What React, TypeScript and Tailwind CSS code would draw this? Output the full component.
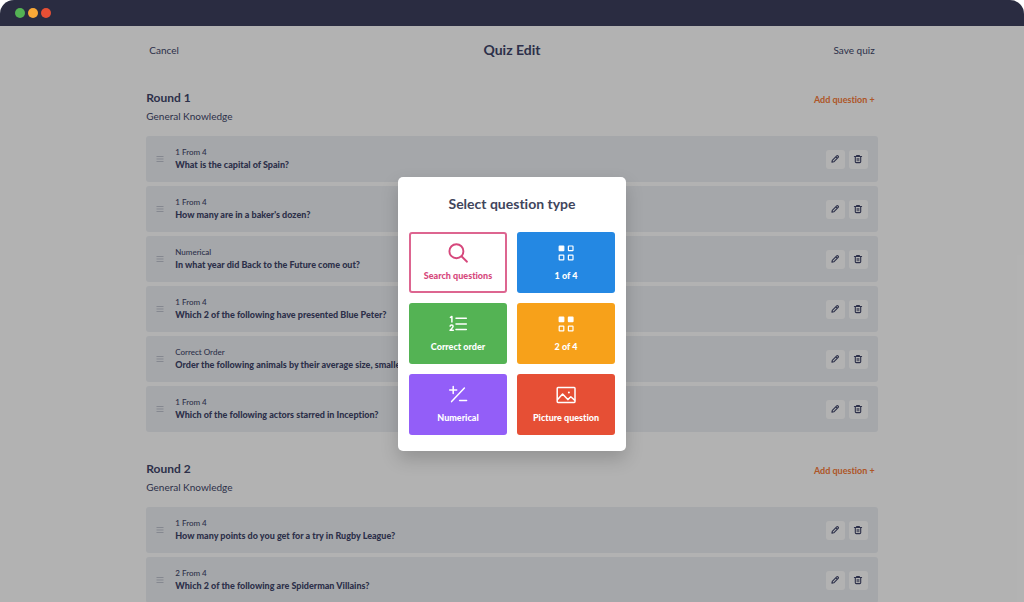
import React from "react";

type Round = { name: string; topic: string; questions: { type: string; text: string }[] };

const rounds: Round[] = [
  {
    name: "Round 1",
    topic: "General Knowledge",
    questions: [
      { type: "1 From 4", text: "What is the capital of Spain?" },
      { type: "1 From 4", text: "How many are in a baker's dozen?" },
      { type: "Numerical", text: "In what year did Back to the Future come out?" },
      { type: "1 From 4", text: "Which 2 of the following have presented Blue Peter?" },
      { type: "Correct Order", text: "Order the following animals by their average size, smallest first" },
      { type: "1 From 4", text: "Which of the following actors starred in Inception?" },
    ],
  },
  {
    name: "Round 2",
    topic: "General Knowledge",
    questions: [
      { type: "1 From 4", text: "How many points do you get for a try in Rugby League?" },
      { type: "2 From 4", text: "Which 2 of the following are Spiderman Villains?" },
    ],
  },
];

function PencilIcon() {
  return (
    <svg viewBox="0 0 12 12" className="size-3" fill="none" stroke="currentColor" strokeLinejoin="round" strokeLinecap="round" aria-hidden="true">
      <path d="M2.9 9.2 3.3 7.3 7.7 2.9a.9.9 0 0 1 1.3 0l.2.2a.9.9 0 0 1 0 1.3L4.8 8.8Z M6.9 3.8 8.3 5.2" strokeWidth="1.1" />
    </svg>
  );
}

function TrashIcon() {
  return (
    <svg viewBox="0 0 12 12" className="size-3" fill="none" stroke="currentColor" strokeLinecap="round" strokeLinejoin="round" aria-hidden="true">
      <path d="M2.4 3.5h7.2M4.6 3.3v-.8h2.8v.8M3.3 3.7v5c0 .6.3.9.9.9h3.6c.6 0 .9-.3.9-.9v-5" strokeWidth="1.1" />
      <path d="M5.2 5.4v2.4M6.8 5.4v2.4" strokeWidth=".9" />
    </svg>
  );
}

function SearchIcon() {
  return (
    <svg viewBox="0 0 24 24" className="size-6" fill="none" stroke="currentColor" strokeWidth="1.9" strokeLinecap="round" aria-hidden="true">
      <circle cx="10.4" cy="10.2" r="7" />
      <path d="m15.5 15.3 5.5 5.4" />
    </svg>
  );
}

function SquaresIcon({ filled }: { filled: number }) {
  const cells = [[5.2, 5], [14.4, 5], [5.2, 14.2], [14.4, 14.2]];
  return (
    <svg viewBox="0 0 24 24" className="size-6" stroke="currentColor" strokeWidth="1.2" strokeLinejoin="round" aria-hidden="true">
      {cells.map(([x, y], i) => (
        <rect key={i} x={x} y={y} width="4.6" height="4.6" rx=".4" fill={i < filled ? "currentColor" : "none"} />
      ))}
    </svg>
  );
}

function OrderIcon() {
  return (
    <svg viewBox="0 0 24 24" className="size-6" fill="none" stroke="currentColor" strokeWidth="1.5" strokeLinecap="round" strokeLinejoin="round" aria-hidden="true">
      <path d="M10 6.2h10.3M10 11.9h10.3M10 17.6h10.3" />
      <path d="M4.4 5.4 5.9 4.5V10M4.1 14.1c.3-1.6 3-1.5 3 .2 0 1.3-1.6 2.2-3 4h3.2" strokeWidth="1.5" />
    </svg>
  );
}

function PlusMinusIcon() {
  return (
    <svg viewBox="0 0 24 24" className="size-6" fill="none" stroke="currentColor" strokeWidth="1.5" strokeLinecap="round" aria-hidden="true">
      <path d="M7.2 3.4v7M3.7 6.9h7M18.4 5 5.6 18.6M13.6 17.5h7" />
    </svg>
  );
}

function PictureIcon() {
  return (
    <svg viewBox="0 0 24 24" className="size-6" fill="none" stroke="currentColor" strokeWidth="1.5" strokeLinejoin="round" strokeLinecap="round" aria-hidden="true">
      <rect x="3.2" y="4.6" width="17.8" height="14.8" rx=".8" />
      <path d="m3.6 16.4 5-5.4 5.2 5.6 3-2.9 3.8 3.4" />
      <circle cx="14.9" cy="9.4" r="1" fill="currentColor" stroke="none" />
    </svg>
  );
}

const types = [
  { label: "Search questions", icon: <SearchIcon />, tone: "border-2 border-[#dd6590] bg-white text-[#d6487c]" },
  { label: "1 of 4", icon: <SquaresIcon filled={1} />, tone: "bg-[#2488e3] text-white" },
  { label: "Correct order", icon: <OrderIcon />, tone: "bg-[#54b354] text-white" },
  { label: "2 of 4", icon: <SquaresIcon filled={2} />, tone: "bg-[#f7a11a] text-white" },
  { label: "Numerical", icon: <PlusMinusIcon />, tone: "bg-[#935ef8] text-white" },
  { label: "Picture question", icon: <PictureIcon />, tone: "bg-[#e64f35] text-white" },
];

function RoundSection({ round }: { round: Round }) {
  return (
    <section className="mb-[27px]">
      <div className="flex items-start justify-between pr-[3px]">
        <div>
          <h2 className="text-xs leading-5 font-bold">{round.name}</h2>
          <p className="text-[10px] leading-4">{round.topic}</p>
        </div>
        <button className="text-[9px] leading-6 font-bold text-[#f97b38]">Add question +</button>
      </div>
      <ul className="mt-3 flex flex-col gap-1">
        {round.questions.map((q) => (
          <li key={q.text} className="flex h-[46px] items-center rounded-[3px] bg-[#edf0f4] px-[10px]">
            <svg viewBox="0 0 8 8" className="size-2 shrink-0 text-[#bfc3cf]" stroke="currentColor" aria-hidden="true">
              <path d="M.5 1.5h7M.5 4h7M.5 6.5h7" />
            </svg>
            <div className="ml-[11px] min-w-0 flex-1">
              <p className="text-[8px] leading-3 font-medium">{q.type}</p>
              <p className="truncate text-[9px] leading-[14px] font-black">{q.text}</p>
            </div>
            <div className="flex gap-1">
              <button aria-label="Edit question" className="grid size-[19px] place-items-center rounded-[3px] bg-white">
                <PencilIcon />
              </button>
              <button aria-label="Delete question" className="grid size-[19px] place-items-center rounded-[3px] bg-white">
                <TrashIcon />
              </button>
            </div>
          </li>
        ))}
      </ul>
    </section>
  );
}

export default function App() {
  return (
    <div className="flex h-screen flex-col overflow-hidden bg-white font-['Lato','Open_Sans',sans-serif] text-[#41466a] [font-variant-ligatures:none]">
      <div className="flex h-[26px] shrink-0 items-center gap-[3px] rounded-t-[14px] bg-[#2a2c41] pl-[15px]">
        <span className="size-[10px] rounded-full bg-[#54b354]" />
        <span className="size-[10px] rounded-full bg-[#faa937]" />
        <span className="size-[10px] rounded-full bg-[#e64f35]" />
      </div>
      <div className="relative min-h-0 flex-1 overflow-hidden">
        <main className="mx-auto w-5/7 max-w-6xl">
          <header className="grid grid-cols-3 items-center px-[3px] pt-3 pb-[26px]">
            <button className="justify-self-start text-[10px]">Cancel</button>
            <h1 className="text-center text-sm leading-6 font-bold">Quiz Edit</h1>
            <button className="justify-self-end text-[10px]">Save quiz</button>
          </header>
          {rounds.map((round) => (
            <RoundSection key={round.name} round={round} />
          ))}
        </main>
        <div className="absolute inset-0 grid place-items-center bg-black/30">
          <div
            role="dialog"
            aria-modal="true"
            aria-labelledby="dialog-title"
            className="w-[228px] rounded-[5px] bg-white px-[11px] pb-4 shadow-[0_8px_18px_rgba(0,0,0,0.18)]"
          >
            <h2 id="dialog-title" className="pt-4 pb-[17px] text-center text-sm leading-[22px] font-bold text-[#3f455c]">
              Select question type
            </h2>
            <div className="grid grid-cols-2 gap-[10px]">
              {types.map((t) => (
                <button key={t.label} className={`flex h-[61px] flex-col items-center justify-center rounded-[3px] ${t.tone}`}>
                  {t.icon}
                  <span className="mt-[3px] text-[9px] leading-4 font-black">{t.label}</span>
                </button>
              ))}
            </div>
          </div>
        </div>
      </div>
    </div>
  );
}
